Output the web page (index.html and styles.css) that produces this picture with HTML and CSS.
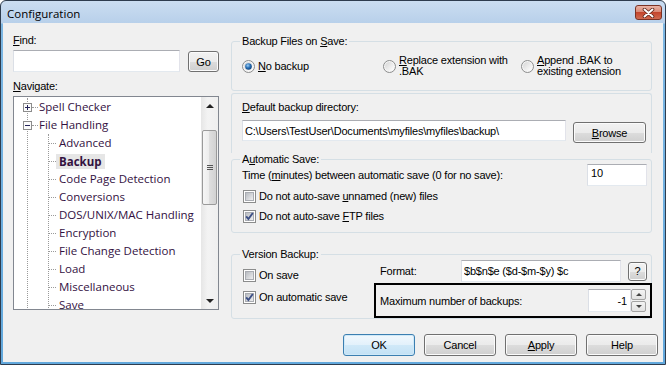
FILE: index.html
```html
<!DOCTYPE html>
<html lang="en">
<head>
  <meta charset="UTF-8">
  <title>Configuration</title>
  <link rel="stylesheet" href="styles.css">
</head>
<body>

  <div class="window">
    <div class="titlebar">
      <span class="title">Configuration</span>
      <button class="close-btn">
        <svg width="13" height="10" viewBox="0 0 13 10">
          <path d="M2.5 1.5 L10.5 8.5 M10.5 1.5 L2.5 8.5" stroke="#5a2418" stroke-width="3.6" stroke-linecap="round"/>
          <path d="M2.5 1.5 L10.5 8.5 M10.5 1.5 L2.5 8.5" stroke="#fff" stroke-width="2" stroke-linecap="round"/>
        </svg>
      </button>
    </div>

    <div class="client">
      <div class="columns">

        <!-- left side: find + navigation tree -->
        <div class="left">
          <div class="lbl"><u>F</u>ind:</div>
          <div class="find-row">
            <input class="edit find-input" type="text">
            <button class="btn go-btn">Go</button>
          </div>
          <div class="lbl nav-lbl"><u>N</u>avigate:</div>

          <div class="tree">
            <div class="tree-items">
              <div class="root-branch">
                <div class="node">
                  <svg class="expander" width="9" height="9" viewBox="0 0 9 9">
                    <rect x=".5" y=".5" width="8" height="8" fill="#fbfbfb" stroke="#8c8c8c"/>
                    <path d="M2 4.5h5M4.5 2v5" stroke="#24245a"/>
                  </svg>
                  <span class="hline root-hline"></span>
                  <span class="node-text">Spell Checker</span>
                </div>
                <div class="node">
                  <svg class="expander" width="9" height="9" viewBox="0 0 9 9">
                    <rect x=".5" y=".5" width="8" height="8" fill="#fbfbfb" stroke="#8c8c8c"/>
                    <path d="M2 4.5h5" stroke="#24245a"/>
                  </svg>
                  <span class="hline root-hline"></span>
                  <span class="node-text">File Handling</span>
                </div>
                <div class="child-branch">
                  <div class="node child"><span class="hline"></span><span class="node-text">Advanced</span></div>
                  <div class="node child"><span class="hline"></span><span class="node-text selected">Backup</span></div>
                  <div class="node child"><span class="hline"></span><span class="node-text">Code Page Detection</span></div>
                  <div class="node child"><span class="hline"></span><span class="node-text">Conversions</span></div>
                  <div class="node child"><span class="hline"></span><span class="node-text">DOS/UNIX/MAC Handling</span></div>
                  <div class="node child"><span class="hline"></span><span class="node-text">Encryption</span></div>
                  <div class="node child"><span class="hline"></span><span class="node-text">File Change Detection</span></div>
                  <div class="node child"><span class="hline"></span><span class="node-text">Load</span></div>
                  <div class="node child"><span class="hline"></span><span class="node-text">Miscellaneous</span></div>
                  <div class="node child"><span class="hline"></span><span class="node-text">Save</span></div>
                </div>
              </div>
            </div>
            <div class="vscroll">
              <div class="sb-btn"><span class="arrow-up"></span></div>
              <div class="sb-track">
                <div class="sb-thumb"><span class="grip"></span></div>
              </div>
              <div class="sb-btn"><span class="arrow-down"></span></div>
            </div>
          </div>
        </div>

        <!-- right side: backup settings -->
        <div class="right">
          <fieldset class="group g-save">
            <legend>Backup Files on <u>S</u>ave:</legend>
            <div class="radio-row">
              <div class="opt opt-1">
                <svg class="radio" width="13" height="13" viewBox="0 0 13 13">
                  <defs>
                    <linearGradient id="radioFill" x1="0" y1="0" x2="1" y2="1">
                      <stop offset="0" stop-color="#d6d6d6"/>
                      <stop offset="1" stop-color="#ffffff"/>
                    </linearGradient>
                    <radialGradient id="radioDot" cx="0.4" cy="0.35" r="0.7">
                      <stop offset="0" stop-color="#9fd0f5"/>
                      <stop offset="0.5" stop-color="#2b72b8"/>
                      <stop offset="1" stop-color="#0c3d74"/>
                    </radialGradient>
                    <linearGradient id="checkFill" x1="0" y1="0" x2="1" y2="1">
                      <stop offset="0" stop-color="#b4b8be"/>
                      <stop offset="1" stop-color="#f2f2f3"/>
                    </linearGradient>
                  </defs>
                  <circle cx="6.5" cy="6.5" r="6" fill="#f6f6f6" stroke="#8b8c8c"/>
                  <circle cx="6.5" cy="6.5" r="4.5" fill="url(#radioFill)"/>
                  <circle cx="6.5" cy="6.5" r="3.3" fill="url(#radioDot)"/>
                </svg>
                <span><u>N</u>o backup</span>
              </div>
              <div class="opt opt-2">
                <svg class="radio" width="13" height="13" viewBox="0 0 13 13">
                  <circle cx="6.5" cy="6.5" r="6" fill="#f6f6f6" stroke="#8b8c8c"/>
                  <circle cx="6.5" cy="6.5" r="4.5" fill="url(#radioFill)"/>
                </svg>
                <span class="two-line"><u>R</u>eplace extension with<br>.BAK</span>
              </div>
              <div class="opt">
                <svg class="radio" width="13" height="13" viewBox="0 0 13 13">
                  <circle cx="6.5" cy="6.5" r="6" fill="#f6f6f6" stroke="#8b8c8c"/>
                  <circle cx="6.5" cy="6.5" r="4.5" fill="url(#radioFill)"/>
                </svg>
                <span class="two-line"><u>A</u>ppend .BAK to<br>existing extension</span>
              </div>
            </div>
          </fieldset>

          <div class="g-dir">
            <div class="lbl"><u>D</u>efault backup directory:</div>
            <div class="dir-row">
              <input class="edit dir-input" type="text" value="C:\Users\TestUser\Documents\myfiles\myfiles\backup\">
              <button class="btn browse-btn"><u>B</u>rowse</button>
            </div>
          </div>

          <fieldset class="group g-auto">
            <legend>A<u>u</u>tomatic Save:</legend>
            <div class="time-row">
              <span>Time (<u>m</u>inutes) between automatic save (0 for no save):</span>
              <input class="edit time-input" type="text" value="10">
            </div>
            <div class="check-row">
              <svg class="check" width="13" height="13" viewBox="0 0 13 13">
                <rect x=".5" y=".5" width="12" height="12" fill="#fff" stroke="#8b8c8c"/>
                <rect x="2.5" y="2.5" width="8" height="8" fill="url(#checkFill)" stroke="#a9acb2"/>
              </svg>
              <span>Do not auto-save <u>u</u>nnamed (new) files</span>
            </div>
            <div class="check-row">
              <svg class="check" width="13" height="13" viewBox="0 0 13 13">
                <rect x=".5" y=".5" width="12" height="12" fill="#fff" stroke="#8b8c8c"/>
                <rect x="2.5" y="2.5" width="8" height="8" fill="url(#checkFill)" stroke="#a9acb2"/>
                <path d="M3.2 6.3 L5.4 9 L9.8 3" fill="none" stroke="#3c4f86" stroke-width="1.9"/>
              </svg>
              <span>Do not auto-save <u>F</u>TP files</span>
            </div>
          </fieldset>

          <fieldset class="group g-version">
            <legend>Version Backup:</legend>
            <div class="version-body">
              <div class="version-checks">
                <div class="check-row">
                  <svg class="check" width="13" height="13" viewBox="0 0 13 13">
                    <rect x=".5" y=".5" width="12" height="12" fill="#fff" stroke="#8b8c8c"/>
                    <rect x="2.5" y="2.5" width="8" height="8" fill="url(#checkFill)" stroke="#a9acb2"/>
                  </svg>
                  <span>On save</span>
                </div>
                <div class="check-row">
                  <svg class="check" width="13" height="13" viewBox="0 0 13 13">
                    <rect x=".5" y=".5" width="12" height="12" fill="#fff" stroke="#8b8c8c"/>
                    <rect x="2.5" y="2.5" width="8" height="8" fill="url(#checkFill)" stroke="#a9acb2"/>
                    <path d="M3.2 6.3 L5.4 9 L9.8 3" fill="none" stroke="#3c4f86" stroke-width="1.9"/>
                  </svg>
                  <span>On automatic save</span>
                </div>
              </div>
              <div class="version-fields">
                <div class="format-row">
                  <span class="format-lbl">Format:</span>
                  <input class="edit format-input" type="text" value="$b$n$e ($d-$m-$y) $c">
                  <button class="btn help-q">?</button>
                </div>
                <div class="max-box">
                  <span>Maximum number of backups:</span>
                  <div class="spin">
                    <input class="edit spin-input" type="text" value="-1">
                    <div class="spin-btns">
                      <div class="spin-btn"><span class="arrow-up small"></span></div>
                      <div class="spin-btn"><span class="arrow-down small"></span></div>
                    </div>
                  </div>
                </div>
              </div>
            </div>
          </fieldset>
        </div>
      </div>

      <div class="btn-row">
        <button class="btn dlg-btn btn-default">OK</button>
        <button class="btn dlg-btn">Cancel</button>
        <button class="btn dlg-btn"><u>A</u>pply</button>
        <button class="btn dlg-btn">Help</button>
      </div>
    </div>
  </div>

</body>
</html>
```

FILE: styles.css
```css
* {
  box-sizing: border-box;
}

body {
  margin: 0;
  background: #fff;
  font-family: 'Liberation Sans', Arial, sans-serif;
  font-size: 11px;
  letter-spacing: -0.2px;
  color: #000;
}

u {
  text-decoration-thickness: 1px;
  text-underline-offset: 1px;
}

.window {
  width: 666px;
  height: 365px;
  border: 1px solid #2e3c4e;
  border-radius: 6px 6px 0 0;
  padding: 0 2px 2px;
  background: linear-gradient(#cbddf1, #b8d0ea 22px, #7db7e3 23px, #62a8dc);
  display: flex;
  flex-direction: column;
}

.titlebar {
  height: 22px;
  display: flex;
  justify-content: space-between;
  align-items: flex-start;
}

.title {
  font-family: 'Open Sans', sans-serif;
  font-size: 11.5px;
  letter-spacing: 0;
  line-height: 16px;
  padding: 5px 0 0 4px;
}

.close-btn {
  margin: 4px 1px 0 0;
  width: 27px;
  height: 15px;
  padding: 0;
  border: 1px solid #7a3224;
  border-radius: 3px;
  background: linear-gradient(#eab3a5, #d98a76 45%, #c4462d 50%, #cf6a50);
  display: flex;
  align-items: center;
  justify-content: center;
}

.client {
  flex: 1;
  background: #f0f0f0;
  display: flex;
  flex-direction: column;
}

.columns {
  display: flex;
  gap: 12px;
  padding-left: 10px;
}

.lbl {
  line-height: 13px;
}

/* left side */

.left {
  width: 206px;
  padding-top: 11px;
}

.find-row {
  display: flex;
  margin-top: 3px;
}

.edit {
  border: 1px solid;
  border-color: #abadb3 #e2e3ea #e3e9ef #dbdfe6;
  background: #fff;
  font-family: 'Liberation Sans', Arial, sans-serif;
  font-size: 11px;
  letter-spacing: -0.2px;
  color: #000;
  padding: 0 2px;
  margin: 0;
  outline: none;
}

.find-input {
  width: 167px;
  height: 22px;
}

.btn {
  border: 1px solid #707070;
  border-radius: 3px;
  background: linear-gradient(#f2f2f2, #ebebeb 50%, #dddddd 50%, #cfcfcf);
  box-shadow: inset 0 0 0 1px #fbfbfb;
  font-family: 'Liberation Sans', Arial, sans-serif;
  font-size: 11px;
  letter-spacing: -0.2px;
  color: #000;
  padding: 0;
}

.go-btn {
  width: 31px;
  height: 21px;
  margin: 1px 0 0 8px;
}

.nav-lbl {
  margin-top: 8px;
}

.tree {
  margin-top: 3px;
  width: 206px;
  height: 214px;
  border: 1px solid #828790;
  background: #fff;
  display: flex;
}

.tree-items {
  flex: 1;
  overflow: hidden;
  padding-top: 1px;
  font-family: 'Open Sans', sans-serif;
  font-size: 11.5px;
  letter-spacing: 0;
  color: #33113f;
}

.root-branch {
  margin-left: 13px;
  border-left: 1px dotted #9a9a9a;
}

.node {
  display: flex;
  align-items: center;
  height: 18px;
  white-space: nowrap;
}

.expander {
  margin-left: -5px;
  flex: none;
}

.hline {
  width: 7px;
  border-top: 1px dotted #9a9a9a;
  flex: none;
}

.root-hline {
  width: 6px;
  margin-right: 1px;
}

.child-branch {
  margin-left: 20px;
  border-left: 1px dotted #9a9a9a;
}

.node-text {
  padding: 0 3px;
  line-height: 16px;
}

.root-hline + .node-text {
  padding-left: 0;
}

.node-text.selected {
  font-weight: 700;
  background: #e6e6e6;
  line-height: 15px;
}

.vscroll {
  width: 17px;
  display: flex;
  flex-direction: column;
  background: linear-gradient(90deg, #e6e6e6, #f3f3f3 40%, #efefef);
}

.sb-btn {
  height: 17px;
  display: flex;
  align-items: center;
  justify-content: center;
}

.sb-track {
  flex: 1;
  padding-top: 16px;
}

.sb-thumb {
  margin: 0 1px;
  height: 75px;
  border: 1px solid #9a9a9a;
  border-radius: 2px;
  background: linear-gradient(90deg, #f6f6f6, #ececec 50%, #dedede 50%, #d2d2d2);
  display: flex;
  align-items: center;
  justify-content: center;
}

.grip {
  width: 6px;
  height: 5px;
  border-top: 1px solid #555;
  border-bottom: 1px solid #555;
  background: linear-gradient(transparent 1px, #555 1px, #555 2px, transparent 2px);
}

.arrow-up {
  border-left: 4px solid transparent;
  border-right: 4px solid transparent;
  border-bottom: 4px solid #222;
}

.arrow-down {
  border-left: 4px solid transparent;
  border-right: 4px solid transparent;
  border-top: 4px solid #222;
}

.arrow-up.small {
  border-left-width: 3px;
  border-right-width: 3px;
  border-bottom: 3px solid #444;
}

.arrow-down.small {
  border-left-width: 3px;
  border-right-width: 3px;
  border-top: 3px solid #444;
}

/* right side */

.right {
  width: 421px;
  padding-top: 12px;
}

.group {
  margin: 0;
  padding: 0;
  border: 1px solid #d5dfe5;
  border-radius: 3px;
  min-inline-size: auto;
}

legend {
  margin-left: 8px;
  padding: 0 2px;
  line-height: 12px;
}

.g-save {
  padding-bottom: 13px;
}

.radio-row {
  display: flex;
  align-items: center;
  height: 22px;
  margin-top: 8px;
  padding-left: 10px;
}

.opt {
  display: flex;
  align-items: center;
  gap: 3px;
}

.opt-1 {
  width: 141px;
}

.opt-2 {
  width: 138px;
}

.radio,
.check {
  flex: none;
}

.two-line {
  line-height: 11px;
}

.g-dir {
  margin-top: 2px;
  border: 1px solid #d5dfe5;
  border-bottom: none;
  border-radius: 3px 3px 0 0;
  padding: 7px 5px 10px 10px;
}

.dir-row {
  display: flex;
  align-items: flex-start;
  margin-top: 6px;
}

.dir-input {
  width: 324px;
  height: 21px;
}

.browse-btn {
  width: 73px;
  height: 21px;
  margin: 2px 0 0 7px;
}

.g-auto {
  padding-bottom: 6px;
}

.time-row {
  display: flex;
  align-items: center;
  justify-content: space-between;
  height: 22px;
  margin-top: -1px;
  padding: 0 4px 0 10px;
}

.time-input {
  width: 60px;
  height: 22px;
  padding: 0 3px 4px;
}

.check-row {
  display: flex;
  align-items: center;
  gap: 3px;
  height: 20px;
  padding-left: 11px;
}

.g-version {
  margin-top: 15px;
}

.version-body {
  display: flex;
}

.version-checks {
  width: 142px;
  padding-top: 4px;
}

.version-checks .check-row {
  height: 22px;
}

.version-fields {
  flex: 1;
}

.format-row {
  display: flex;
  align-items: center;
  height: 22px;
  padding-left: 6px;
}

.format-lbl {
  width: 81px;
}

.format-input {
  width: 160px;
  height: 22px;
}

.help-q {
  width: 19px;
  height: 19px;
  margin-left: 7px;
}

.max-box {
  margin: 1px -1px 0 0;
  height: 35px;
  border: 2px solid #000;
  padding: 0 4px 0 4px;
  display: flex;
  align-items: center;
  justify-content: space-between;
}

.spin {
  display: flex;
}

.spin-input {
  width: 43px;
  height: 23px;
  text-align: right;
  padding: 0 3px;
}

.spin-btns {
  width: 15px;
  display: flex;
  flex-direction: column;
  gap: 1px;
}

.spin-btn {
  flex: 1;
  border: 1px solid #a3a3a3;
  border-radius: 2px;
  background: linear-gradient(#f3f3f3, #e2e2e2);
  display: flex;
  align-items: center;
  justify-content: center;
}

/* dialog buttons */

.btn-row {
  display: flex;
  justify-content: flex-end;
  gap: 9px;
  margin-top: 15px;
  padding-right: 5px;
}

.dlg-btn {
  width: 72px;
  height: 22px;
}

.btn-default {
  border-color: #3c7fb1;
  background: linear-gradient(#f1f8fd, #e3f1fb 50%, #d1e9f8 50%, #c3e1f5);
  box-shadow: inset 0 0 0 1px #cfe9f8;
}
```
